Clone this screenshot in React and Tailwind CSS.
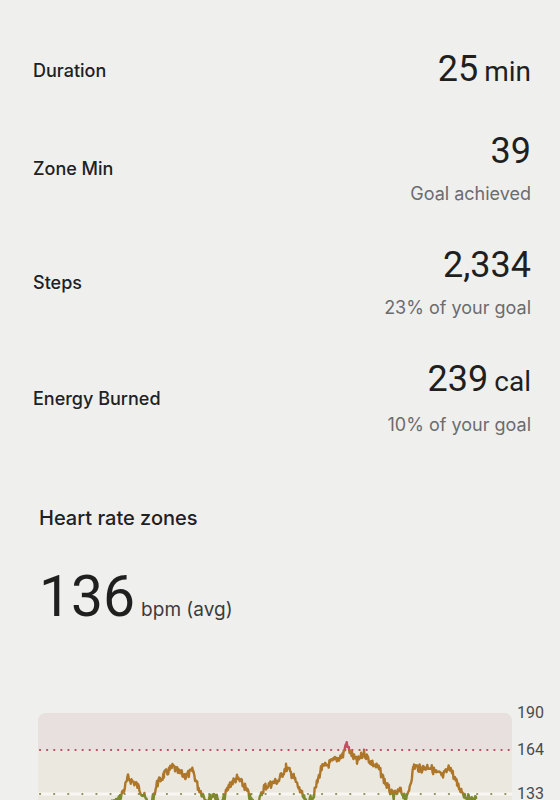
import React from "react";

const pts = [
  [90, 812], [96, 806], [107, 805], [118, 801], [124, 790], [128, 778], [136, 784], [143, 794], [150, 808],
  [157, 784], [164, 775], [173, 767], [179, 773], [186, 776], [193, 771], [198, 787],
  [207, 801], [214, 794], [221, 805], [230, 784], [237, 778], [245, 787], [250, 798],
  [257, 808], [264, 787], [271, 784], [279, 780], [286, 767], [293, 776], [300, 791],
  [307, 805], [314, 794], [321, 769], [332, 762], [343, 755], [346, 744], [352, 755],
  [357, 762], [364, 753], [371, 762], [379, 769], [386, 784], [393, 796], [400, 791],
  [407, 798], [414, 766], [421, 769], [429, 766], [436, 773], [443, 776], [450, 767],
  [457, 784], [464, 794], [471, 801], [476, 799],
];

function buildPath() {
  let seed = 7;
  const rnd = () => {
    seed = (seed * 9301 + 49297) % 233280;
    return seed / 233280;
  };
  const out = [];
  for (let i = 0; i < pts.length - 1; i++) {
    const [x0, y0] = pts[i];
    const [x1, y1] = pts[i + 1];
    for (let x = x0; x < x1; x += 0.7) {
      const t = (x - x0) / (x1 - x0);
      const y = y0 + (y1 - y0) * t + (rnd() - 0.5) * 8;
      out.push([x, y]);
    }
  }
  out.push(pts[pts.length - 1]);
  return out.map((p, i) => `${i ? "L" : "M"}${(p[0] - 38).toFixed(1)},${(p[1] - 713).toFixed(1)}`).join(" ");
}

const d = buildPath();

const SANS = { fontFamily: "Inter, 'Open Sans', sans-serif" };

function Row({ label, value, unit, sub }) {
  return (
    <div className="flex items-center justify-between">
      <div className="text-[18px] font-medium text-[#202124]" style={SANS}>{label}</div>
      <div className="flex flex-col items-end">
        <div className="text-[36px] leading-[40px] text-[#1f1f1f]">
          {value}
          {unit && <span className="text-[28px] ml-[6px]">{unit}</span>}
        </div>
        {sub && <div className="text-[18px] leading-[24px] mt-[11px] text-[#6b6c6e]" style={SANS}>{sub}</div>}
      </div>
    </div>
  );
}

export default function App() {
  const W = 474;
  return (
    <div
      className="w-[560px] h-[800px] overflow-hidden bg-[#eff0ee]"
      style={{ fontFamily: "Roboto, 'Open Sans', sans-serif" }}
    >
      <div className="pl-[33px] pr-[29px] pt-[49px] flex flex-col gap-[39px]">
        <Row label="Duration" value="25" unit="min" />
        <Row label="Zone Min" value="39" sub="Goal achieved" />
        <Row label="Steps" value="2,334" sub="23% of your goal" />
        <Row label="Energy Burned" value="239" unit="cal" sub="10% of your goal" />
      </div>

      <div className="pl-[39px] mt-[67px]">
        <div className="text-[20px] leading-[28px] font-medium text-[#202124]" style={SANS}>Heart rate zones</div>
        <div className="flex items-baseline mt-[35px]">
          <span className="text-[57px] leading-[60px] text-[#1f1f1f]">136</span>
          <span className="text-[19px] ml-[6px] text-[#3c3c3c]" style={SANS}>bpm (avg)</span>
        </div>
      </div>

      <div className="flex mt-[86px] pl-[38px]">
        <div className="relative w-[474px] h-[140px] rounded-t-[8px] overflow-hidden bg-[#ebe8df]">
          <svg width={W} height="140" className="absolute left-0 top-0">
            <defs>
              <clipPath id="cRed"><rect x="0" y="0" width={W} height="37" /></clipPath>
              <clipPath id="cOr"><rect x="0" y="37" width={W} height="44" /></clipPath>
              <clipPath id="cGr"><rect x="0" y="81" width={W} height="80" /></clipPath>
            </defs>
            <rect x="0" y="0" width={W} height="37" fill="#e8dfdf" />
            <line x1="2" y1="37" x2={W} y2="37" stroke="#b8485c" strokeWidth="2.2" strokeDasharray="0.1 7" strokeLinecap="round" />
            <line x1="0" y1="81" x2={W} y2="81" stroke="#f7f6f2" strokeWidth="3" />
            <line x1="2" y1="81" x2={W} y2="81" stroke="#8f8d5a" strokeWidth="2.2" strokeDasharray="0.1 14" strokeLinecap="round" />
            <path d={d} fill="none" stroke="#c14f5d" strokeWidth="2.4" strokeLinejoin="round" clipPath="url(#cRed)" />
            <path d={d} fill="none" stroke="#ad7629" strokeWidth="2.4" strokeLinejoin="round" clipPath="url(#cOr)" />
            <path d={d} fill="none" stroke="#7b8a2c" strokeWidth="2.4" strokeLinejoin="round" clipPath="url(#cGr)" />
          </svg>
        </div>
        <div className="relative w-[48px] h-[140px] text-[16px] text-[#4a4a4a]">
          <span className="absolute left-[5px] top-[-12px] leading-[24px]">190</span>
          <span className="absolute left-[5px] top-[25px] leading-[24px]">164</span>
          <span className="absolute left-[5px] top-[69px] leading-[24px]">133</span>
        </div>
      </div>
    </div>
  );
}
